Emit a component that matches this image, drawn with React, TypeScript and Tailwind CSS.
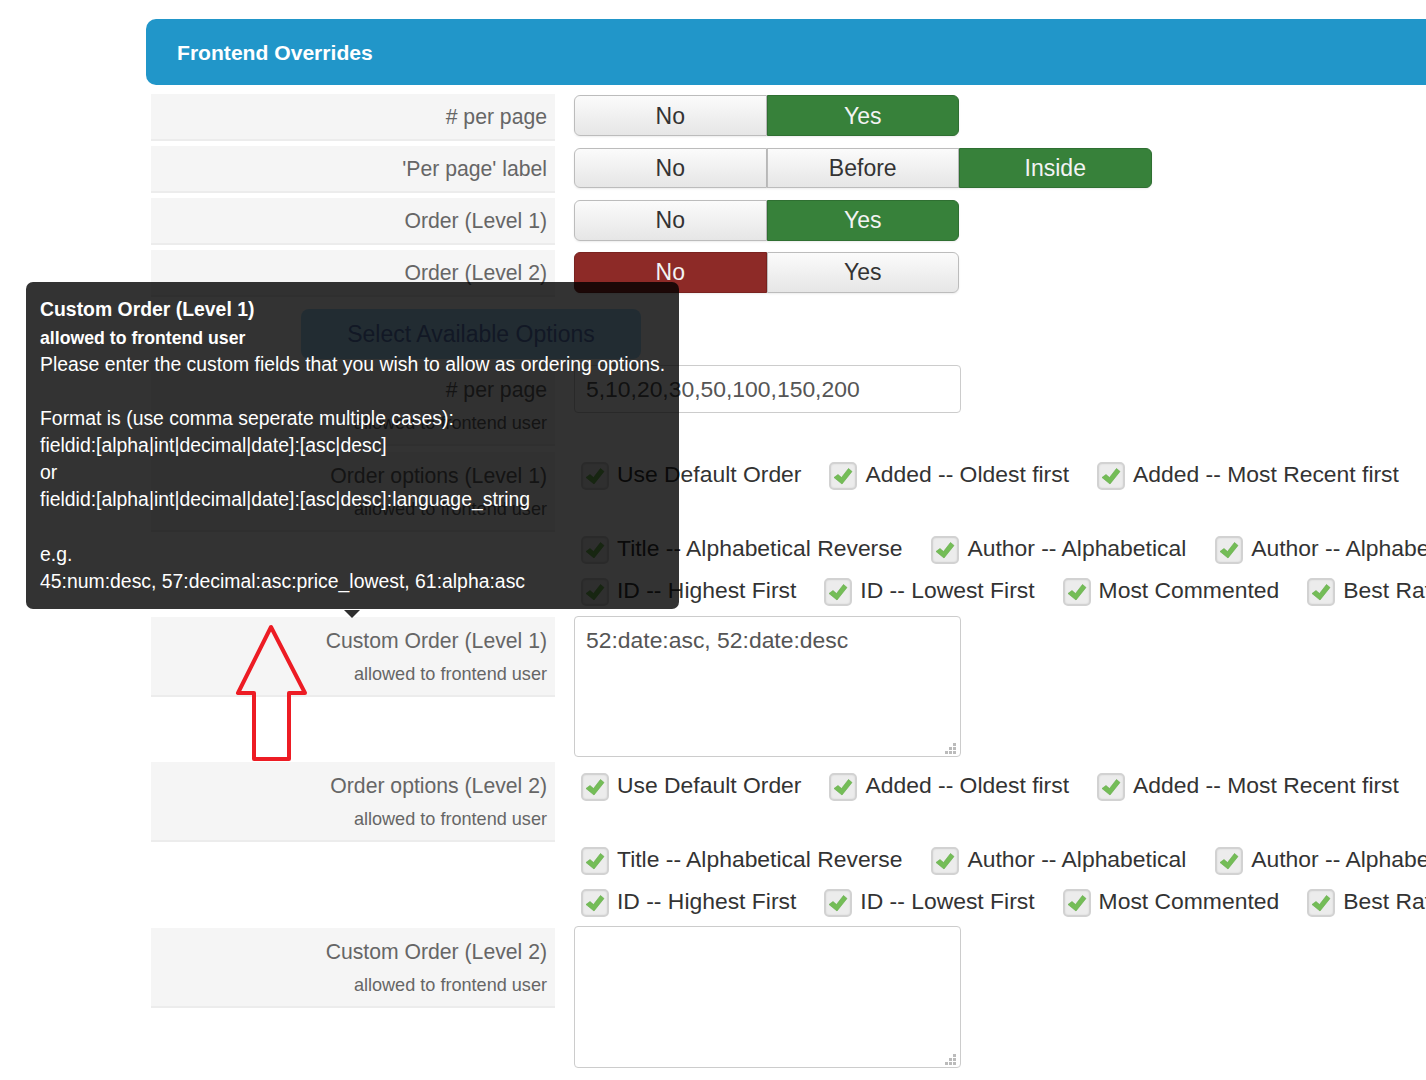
import React from 'react';

const orderOptions = [
  ['Use Default Order', 'Added -- Oldest first', 'Added -- Most Recent first'],
  ['Title -- Alphabetical Reverse', 'Author -- Alphabetical', 'Author -- Alphabetical Reverse'],
  ['ID -- Highest First', 'ID -- Lowest First', 'Most Commented', 'Best Rated'],
];

const Label = ({ title, sub }: { title: string; sub?: boolean }) => (
  <div
    className={`w-[404px] shrink-0 border-b-2 border-[#ececec] bg-[#f5f5f5] pr-2 text-right text-[#666] ${
      sub ? 'h-[80px] pt-[9px]' : 'h-[47px] pt-[8px]'
    }`}
  >
    <div className="text-[21.2px] leading-[30px]">{title}</div>
    {sub && <div className="mt-[3px] text-[18.1px] leading-[30px]">allowed to frontend user</div>}
  </div>
);

const Toggle = ({
  options,
  active,
  tone,
  size = 'h-[41px]',
  nudge = '',
}: {
  options: string[];
  active: number;
  tone: 'green' | 'red';
  size?: string;
  nudge?: string;
}) => (
  <div className={`flex text-[23px] ${size}`}>
    {options.map((o, i) => {
      const on = i === active;
      const first = i === 0;
      const last = i === options.length - 1;
      return (
        <div
          key={o}
          className={`flex w-[192.5px] items-center justify-center border shadow-[0_1px_2px_rgba(0,0,0,0.08)] ${nudge} ${
            first ? 'rounded-l-[6px]' : ''
          } ${last ? 'rounded-r-[6px]' : ''} ${
            on
              ? tone === 'green'
                ? 'border-[#2f6f32] bg-[#37813a] text-[#f3f3f3]'
                : 'border-[#7a2320] bg-[#8d2a27] text-[#f3f3f3]'
              : 'border-[#bcbcbc] bg-gradient-to-b from-[#fbfbfb] to-[#e6e6e6] text-[#333]'
          }`}
        >
          {o}
        </div>
      );
    })}
  </div>
);

const CheckBox = () => (
  <span className="flex size-[28px] shrink-0 items-center justify-center rounded-[5px] border-2 border-[#d2d2d2] bg-[#ececec] shadow-[inset_0_0_2px_rgba(0,0,0,0.1)]">
    <svg width="20" height="20" viewBox="0 0 20 20">
      <path d="M1 11.5 L5 8.5 L8.5 11.5 L15.5 2.5 L19 5.5 L9 18 Z" fill="#74bd57" stroke="#62a947" strokeWidth="0.6" strokeLinejoin="round" />
    </svg>
  </span>
);

const Options = ({ size }: { size: string }) => (
  <div className={`pl-[7px] text-[22.9px] text-[#333] ${size}`}>
    {orderOptions.map((row, i) => (
      <div
        key={i}
        className={`flex h-[42px] items-center whitespace-nowrap ${i === 0 ? 'mb-[32px] gap-[28px]' : ''} ${i === 1 ? 'gap-[29px]' : ''} ${
          i === 2 ? 'gap-[28px]' : ''
        }`}
      >
        {row.map((o) => (
          <span key={o} className="flex items-center gap-[8px]">
            <CheckBox />
            <span className="pb-[3px]">{o}</span>
          </span>
        ))}
      </div>
    ))}
  </div>
);

const TextBox = ({ value, size }: { value: string; size: string }) => (
  <div className={`relative w-[387px] ${size}`}>
    <textarea
      readOnly
      defaultValue={value}
      className="size-full resize-none rounded-[4px] border border-[#ccc] px-[11px] py-[8px] text-[22.9px] leading-[30px] text-[#555] outline-none"
    />
    <svg className="absolute bottom-[3px] right-[5px]" width="11" height="11" viewBox="0 0 11 11" fill="#bbb">
      <rect x="8" y="0" width="3" height="3" />
      <rect x="4" y="4" width="3" height="3" />
      <rect x="8" y="4" width="3" height="3" />
      <rect x="0" y="8" width="3" height="3" />
      <rect x="4" y="8" width="3" height="3" />
      <rect x="8" y="8" width="3" height="3" />
    </svg>
  </div>
);

const Row = ({ label, children }: { label: React.ReactNode; children: React.ReactNode }) => (
  <div className="mb-[5px] flex items-start">
    {label}
    <div className="ml-[19px]">{children}</div>
  </div>
);

const App = () => {
  return (
    <div
      className="relative h-[1080px] w-[1426px] overflow-hidden bg-white pl-[151px] pt-[19px]"
      style={{ fontFamily: '"Liberation Sans", Arial, sans-serif' }}
    >
      <div className="mb-[9px] -ml-[5px] flex h-[66px] w-[1400px] items-center rounded-l-[10px] bg-[#2196c9] pl-[31px] pt-px text-[21.1px] font-bold text-white">
        Frontend Overrides
      </div>

      <Row label={<Label title="# per page" />}>
        <div className="pt-px"><Toggle options={['No', 'Yes']} active={1} tone="green" nudge="pt-px" /></div>
      </Row>
      <Row label={<Label title="'Per page' label" />}>
        <div className="pt-[2px]"><Toggle options={['No', 'Before', 'Inside']} active={2} tone="green" size="h-[40px]" /></div>
      </Row>
      <Row label={<Label title="Order (Level 1)" />}>
        <div className="pt-[2px]"><Toggle options={['No', 'Yes']} active={1} tone="green" nudge="pb-px" /></div>
      </Row>
      <Row label={<Label title="Order (Level 2)" />}>
        <div className="pt-[2px]"><Toggle options={['No', 'Yes']} active={0} tone="red" nudge="pb-px" /></div>
      </Row>

      <div className="mb-[7px] ml-[150px] mt-[12px] flex h-[50px] w-[340px] items-center justify-center rounded-[8px] bg-[#aadcfa] text-[23px] text-[#5a78b8]">
        Select Available Options
      </div>

      <div className="mb-[6px] flex items-start">
        <Label title="# per page" sub />
        <div className="-mt-px ml-[19px] flex h-[48px] w-[387px] items-center rounded-[4px] border border-[#ccc] pl-[11px] text-[22.9px] text-[#555]">
          5,10,20,30,50,100,150,200
        </div>
      </div>
      <Row label={<Label title="Order options (Level 1)" sub />}>
        <Options size="h-[160px] pt-[3px]" />
      </Row>
      <Row label={<Label title="Custom Order (Level 1)" sub />}>
        <div className="-mt-px"><TextBox value="52:date:asc, 52:date:desc" size="h-[141px]" /></div>
      </Row>
      <Row label={<Label title="Order options (Level 2)" sub />}>
        <Options size="h-[161px] pt-[4px]" />
      </Row>
      <Row label={<Label title="Custom Order (Level 2)" sub />}>
        <div className="-mt-[2px]"><TextBox value="" size="h-[142px]" /></div>
      </Row>

      {/* tooltip over the form */}
      <div className="absolute left-[26px] top-[282px] h-[327px] w-[653px] rounded-[7px] bg-black/80 px-[14px] pt-[12px] text-[19.4px] leading-[27px] text-white">
        <div className="text-[19.4px] font-bold leading-[30px]">Custom Order (Level 1)</div>
        <div className="mt-px text-[17.7px] font-bold leading-[26px]">allowed to frontend user</div>
        <div className="whitespace-nowrap">Please enter the custom fields that you wish to allow as ordering options.</div>
        <div className="h-[27px]" />
        <div>Format is (use comma seperate multiple cases):</div>
        <div>fieldid:[alpha|int|decimal|date]:[asc|desc]</div>
        <div>or</div>
        <div>fieldid:[alpha|int|decimal|date]:[asc|desc]:language_string</div>
        <div className="h-[28px]" />
        <div>e.g.</div>
        <div>45:num:desc, 57:decimal:asc:price_lowest, 61:alpha:asc</div>
      </div>
      <div className="absolute left-[344px] top-[610px] size-0 border-x-[8px] border-t-[8px] border-x-transparent border-t-[#2e2e2e]" />

      {/* red annotation arrow */}
      <svg className="absolute left-[230px] top-[618px]" width="84" height="148" viewBox="230 618 84 148">
        <path
          d="M271 627 L238 693 L254 693 L254 759 L289 759 L289 693 L305 693 Z"
          fill="none"
          stroke="#ed1c24"
          strokeWidth="4"
          strokeLinejoin="round"
        />
      </svg>
    </div>
  );
};

export default App;
